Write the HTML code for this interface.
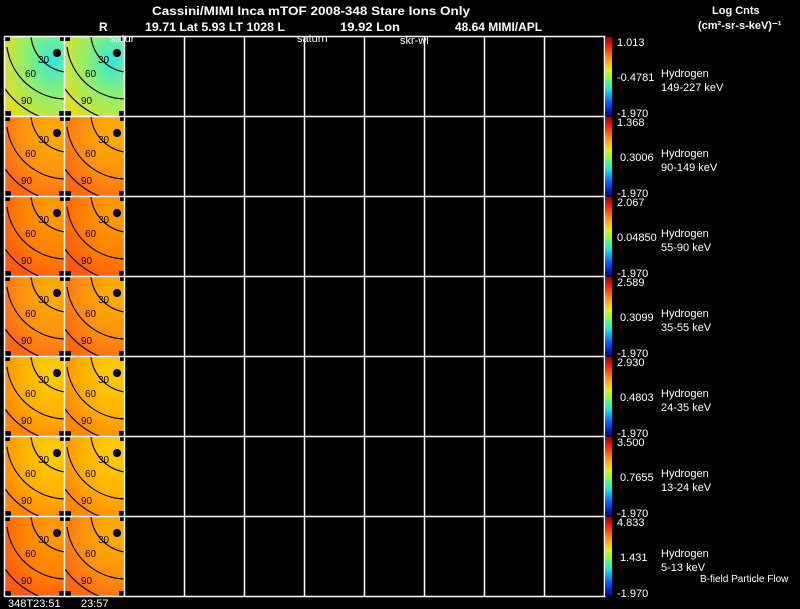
<!DOCTYPE html>
<html><head><style>
body{margin:0;background:#000;width:800px;height:609px;overflow:hidden}
svg{display:block;font-family:"Liberation Sans",sans-serif}
</style></head><body>
<svg width="800" height="609" xmlns="http://www.w3.org/2000/svg">
<defs>
<linearGradient id="cb" x1="0" y1="0" x2="0" y2="1">
<stop offset="0" stop-color="#a00000"/><stop offset="0.12" stop-color="#ff2000"/><stop offset="0.28" stop-color="#ff9a00"/><stop offset="0.42" stop-color="#f0f000"/><stop offset="0.55" stop-color="#60ff60"/><stop offset="0.68" stop-color="#00e0ff"/><stop offset="0.82" stop-color="#0060ff"/><stop offset="1" stop-color="#0000a0"/>
</linearGradient>
<radialGradient id="g1" cx="0.8" cy="0.3" r="0.9"><stop offset="0" stop-color="#30e8e0"/><stop offset="0.5" stop-color="#90f070"/><stop offset="1" stop-color="#e0e020"/></radialGradient>
<radialGradient id="g2" cx="0.8" cy="0.2" r="0.9"><stop offset="0" stop-color="#ffb000"/><stop offset="0.6" stop-color="#ff9010"/><stop offset="1" stop-color="#ff6a10"/></radialGradient>
<radialGradient id="g3" cx="0.8" cy="0.2" r="0.9"><stop offset="0" stop-color="#ffa000"/><stop offset="0.6" stop-color="#ff8000"/><stop offset="1" stop-color="#ff5a10"/></radialGradient>
<radialGradient id="g4" cx="0.8" cy="0.2" r="0.9"><stop offset="0" stop-color="#ffd000"/><stop offset="0.6" stop-color="#ffb000"/><stop offset="1" stop-color="#ff8800"/></radialGradient>
<g id="arcs" fill="none" stroke="#000" stroke-width="1.2">
<path d="M26 0 A40 40 0 0 0 60 35"/>
<path d="M2 10 A60 60 0 0 0 60 62"/>
<path d="M0 52 A80 80 0 0 0 36 80"/>
<circle cx="52" cy="16" r="3.5" fill="#000"/>
<path d="M0 0h5v4h-5z M55 0h5v4h-5z M0 74h6v6h-6z M54 74h6v6h-6z" fill="#000" stroke="none"/>
</g>
</defs>
<g font-size="12" fill="#fff" font-weight="bold">
<text x="152" y="15" textLength="318" lengthAdjust="spacingAndGlyphs">Cassini/MIMI Inca mTOF  2008-348   Stare    Ions Only</text>
<text x="99" y="31">R</text>
<text x="145" y="31" textLength="140" lengthAdjust="spacingAndGlyphs">19.71 Lat 5.93 LT 1028 L</text>
<text x="340" y="31" textLength="60" lengthAdjust="spacingAndGlyphs">19.92 Lon</text>
<text x="455" y="31" textLength="87" lengthAdjust="spacingAndGlyphs">48.64  MIMI/APL</text>
<text x="712" y="14" font-size="11">Log Cnts</text>
<text x="698" y="29" font-size="11">(cm²-sr-s-keV)⁻¹</text>
</g>
<g id="panels">
<rect x="5" y="37" width="59" height="79" fill="url(#g1)"/><rect x="65" y="37" width="59" height="79" fill="url(#g1)"/>
<rect x="5" y="117" width="59" height="79" fill="url(#g2)"/><rect x="65" y="117" width="59" height="79" fill="url(#g2)"/>
<rect x="5" y="197" width="59" height="79" fill="url(#g3)"/><rect x="65" y="197" width="59" height="79" fill="url(#g3)"/>
<rect x="5" y="277" width="59" height="79" fill="url(#g2)"/><rect x="65" y="277" width="59" height="79" fill="url(#g2)"/>
<rect x="5" y="357" width="59" height="79" fill="url(#g4)"/><rect x="65" y="357" width="59" height="79" fill="url(#g4)"/>
<rect x="5" y="437" width="59" height="79" fill="url(#g4)"/><rect x="65" y="437" width="59" height="79" fill="url(#g4)"/>
<rect x="5" y="517" width="59" height="79" fill="url(#g3)"/><rect x="65" y="517" width="59" height="79" fill="url(#g2)"/>
</g>
<g font-size="10" fill="#000">
<use href="#arcs" x="5" y="37"/><use href="#arcs" x="65" y="37"/>
<use href="#arcs" x="5" y="117"/><use href="#arcs" x="65" y="117"/>
<use href="#arcs" x="5" y="197"/><use href="#arcs" x="65" y="197"/>
<use href="#arcs" x="5" y="277"/><use href="#arcs" x="65" y="277"/>
<use href="#arcs" x="5" y="357"/><use href="#arcs" x="65" y="357"/>
<use href="#arcs" x="5" y="437"/><use href="#arcs" x="65" y="437"/>
<use href="#arcs" x="5" y="517"/><use href="#arcs" x="65" y="517"/>
<text x="38" y="63">30</text><text x="25" y="77">60</text><text x="21" y="104">90</text>
<text x="98" y="63">30</text><text x="85" y="77">60</text><text x="81" y="104">90</text>
<text x="38" y="143">30</text><text x="25" y="157">60</text><text x="21" y="184">90</text>
<text x="98" y="143">30</text><text x="85" y="157">60</text><text x="81" y="184">90</text>
<text x="38" y="223">30</text><text x="25" y="237">60</text><text x="21" y="264">90</text>
<text x="98" y="223">30</text><text x="85" y="237">60</text><text x="81" y="264">90</text>
<text x="38" y="303">30</text><text x="25" y="317">60</text><text x="21" y="344">90</text>
<text x="98" y="303">30</text><text x="85" y="317">60</text><text x="81" y="344">90</text>
<text x="38" y="383">30</text><text x="25" y="397">60</text><text x="21" y="424">90</text>
<text x="98" y="383">30</text><text x="85" y="397">60</text><text x="81" y="424">90</text>
<text x="38" y="463">30</text><text x="25" y="477">60</text><text x="21" y="504">90</text>
<text x="98" y="463">30</text><text x="85" y="477">60</text><text x="81" y="504">90</text>
<text x="38" y="543">30</text><text x="25" y="557">60</text><text x="21" y="584">90</text>
<text x="98" y="543">30</text><text x="85" y="557">60</text><text x="81" y="584">90</text>
</g>
<g stroke="#fff" stroke-width="1.5" fill="none">
<path d="M4.5 36.5H605.5M4.5 116.5H605.5M4.5 196.5H605.5M4.5 276.5H605.5M4.5 356.5H605.5M4.5 436.5H605.5M4.5 516.5H605.5M4.5 596.5H605.5"/>
<path d="M4.5 36.5V596.5M64.5 36.5V596.5M124.5 36.5V596.5M184.5 36.5V596.5M244.5 36.5V596.5M304.5 36.5V596.5M364.5 36.5V596.5M424.5 36.5V596.5M484.5 36.5V596.5M544.5 36.5V596.5M604.5 36.5V596.5"/>
</g>
<g>
<rect x="605" y="37" width="7" height="79" fill="url(#cb)"/><rect x="605" y="117" width="7" height="79" fill="url(#cb)"/>
<rect x="605" y="197" width="7" height="79" fill="url(#cb)"/><rect x="605" y="277" width="7" height="79" fill="url(#cb)"/>
<rect x="605" y="357" width="7" height="79" fill="url(#cb)"/><rect x="605" y="437" width="7" height="79" fill="url(#cb)"/>
<rect x="605" y="517" width="7" height="79" fill="url(#cb)"/>
</g>
<g font-size="11" fill="#fff">
<text x="110" y="42">satur</text><text x="297" y="42">saturn</text><text x="400" y="44">skr-wl</text>
<text x="617" y="46">1.013</text><text x="617" y="81">-0.4781</text><text x="617" y="117">-1.970</text>
<text x="617" y="126">1.368</text><text x="620" y="161">0.3006</text><text x="617" y="197">-1.970</text>
<text x="617" y="206">2.067</text><text x="617" y="241">0.04850</text><text x="617" y="277">-1.970</text>
<text x="617" y="286">2.589</text><text x="620" y="321">0.3099</text><text x="617" y="357">-1.970</text>
<text x="617" y="366">2.930</text><text x="620" y="401">0.4803</text><text x="617" y="437">-1.970</text>
<text x="617" y="446">3.500</text><text x="620" y="481">0.7655</text><text x="617" y="517">-1.970</text>
<text x="617" y="526">4.833</text><text x="620" y="561">1.431</text><text x="617" y="597">-1.970</text>
<text x="661" y="77">Hydrogen</text><text x="661" y="91">149-227 keV</text>
<text x="661" y="157">Hydrogen</text><text x="661" y="171">90-149 keV</text>
<text x="661" y="237">Hydrogen</text><text x="661" y="251">55-90 keV</text>
<text x="661" y="317">Hydrogen</text><text x="661" y="331">35-55 keV</text>
<text x="661" y="397">Hydrogen</text><text x="661" y="411">24-35 keV</text>
<text x="661" y="477">Hydrogen</text><text x="661" y="491">13-24 keV</text>
<text x="661" y="557">Hydrogen</text><text x="661" y="571">5-13 keV</text>
<text x="700" y="582" font-size="10">B-field Particle Flow</text>
<text x="8" y="607">348T23:51</text><text x="81" y="607">23:57</text>
</g>
</svg>
</body></html>
